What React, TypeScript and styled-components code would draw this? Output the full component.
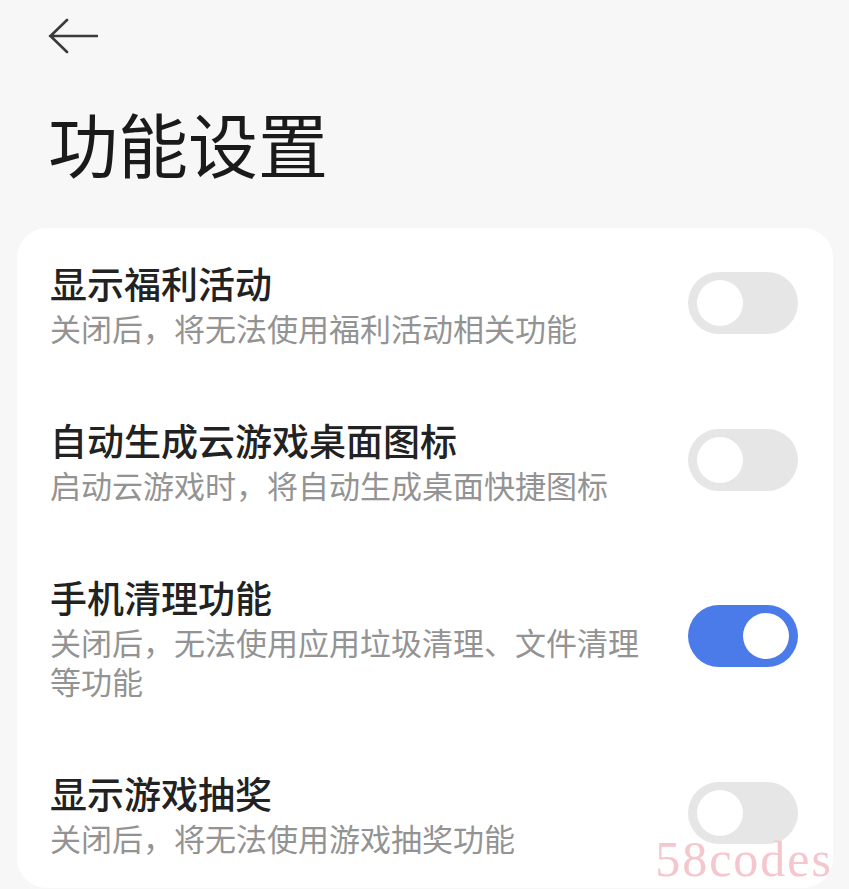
import React, { useState } from "react";
import styled, { createGlobalStyle } from "styled-components";

const GlobalStyle = createGlobalStyle`
  html, body {
    margin: 0;
    padding: 0;
    background: #f7f7f7;
  }
  body {
    font-family: "Noto Sans CJK SC", "Noto Sans", sans-serif;
    color: #1f1f1f;
  }
`;

const Page = styled.div`
  position: relative;
  width: 849px;
  height: 889px;
  overflow: hidden;
  background: #f7f7f7;
`;

const Header = styled.header`
  display: flex;
  flex-direction: column;
  padding: 18px 0 0 48px;
`;

const BackButton = styled.button`
  display: flex;
  width: 50px;
  height: 36px;
  padding: 0;
  border: none;
  background: transparent;
  color: #3a3a3a;
  cursor: pointer;
`;

const Title = styled.h1`
  margin: 54px 0 0;
  font-size: 70px;
  line-height: 70px;
  font-weight: 400;
  color: #1a1a1a;
`;

const Card = styled.section`
  margin: 50px 16px 0 17px;
  background: #fff;
  border-radius: 30px;
`;

const Row = styled.div`
  display: flex;
  align-items: center;
  justify-content: space-between;
  padding: 30px 35px 38px 33px;

  &:last-child {
    padding-bottom: 31px;
  }
`;

const Texts = styled.div`
  display: flex;
  flex-direction: column;
  max-width: 600px;
`;

const ItemTitle = styled.div`
  font-size: 37px;
  line-height: 50px;
  font-weight: 500;
  color: #222;
`;

const ItemDesc = styled.div`
  font-size: 31px;
  line-height: 39px;
  color: #939393;
`;

const Track = styled.button<{ $on: boolean }>`
  flex: none;
  position: relative;
  width: 110px;
  height: 62px;
  padding: 0;
  border: none;
  border-radius: 31px;
  background: ${(p) => (p.$on ? "#4a7be9" : "#e6e6e6")};
  cursor: pointer;
  transition: background-color 0.2s ease;
`;

const Thumb = styled.span<{ $on: boolean }>`
  position: absolute;
  top: 8px;
  left: ${(p) => (p.$on ? "55px" : "9px")};
  width: 46px;
  height: 46px;
  border-radius: 50%;
  background: #fff;
  transition: left 0.2s ease;
`;

const Watermark = styled.div`
  position: absolute;
  right: 16px;
  bottom: 5px;
  font-family: "Liberation Serif", serif;
  font-size: 50px;
  line-height: 50px;
  letter-spacing: 2px;
  color: #f6c6ce;
  pointer-events: none;
`;

const items = [
  { title: "显示福利活动", desc: "关闭后，将无法使用福利活动相关功能", on: false },
  { title: "自动生成云游戏桌面图标", desc: "启动云游戏时，将自动生成桌面快捷图标", on: false },
  { title: "手机清理功能", desc: "关闭后，无法使用应用垃圾清理、文件清理等功能", on: true },
  { title: "显示游戏抽奖", desc: "关闭后，将无法使用游戏抽奖功能", on: false },
];

function Toggle({ initial }: { initial: boolean }) {
  const [on, setOn] = useState(initial);
  return (
    <Track $on={on} onClick={() => setOn((v) => !v)} aria-pressed={on}>
      <Thumb $on={on} />
    </Track>
  );
}

export default function App() {
  return (
    <Page>
      <GlobalStyle />
      <Header>
        <BackButton aria-label="返回">
          <svg width="50" height="36" viewBox="0 0 50 36" fill="none">
            <path
              d="M2 18H49M19 2L2.5 18L19 34"
              stroke="currentColor"
              strokeWidth="2.6"
              strokeLinecap="round"
              strokeLinejoin="round"
            />
          </svg>
        </BackButton>
        <Title>功能设置</Title>
      </Header>
      <Card>
        {items.map((item) => (
          <Row key={item.title}>
            <Texts>
              <ItemTitle>{item.title}</ItemTitle>
              <ItemDesc>{item.desc}</ItemDesc>
            </Texts>
            <Toggle initial={item.on} />
          </Row>
        ))}
      </Card>
      <Watermark>58codes</Watermark>
    </Page>
  );
}
